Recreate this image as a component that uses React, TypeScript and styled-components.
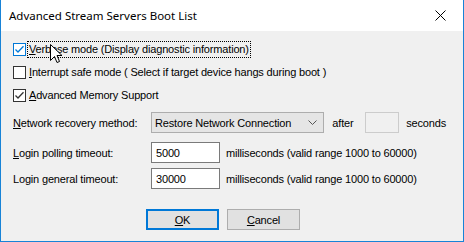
import React from 'react';
import styled, { createGlobalStyle } from 'styled-components';

const Global = createGlobalStyle`
    html, body {
        margin: 0;
        padding: 0;
        background: #ffffff;
    }
    body {
        font-family: 'Liberation Sans', Arial, sans-serif;
        font-size: 11px;
        letter-spacing: -0.17px;
        color: #000000;
    }
`;

const Window = styled.div`
    position: relative;
    width: 464px;
    height: 242px;
    box-sizing: border-box;
    border: 1px solid #1883d7;
    border-top: none;
    background: #f0f0f0;
    display: flex;
    flex-direction: column;
    overflow: hidden;
`;

const TitleBar = styled.div`
    height: 31px;
    flex-shrink: 0;
    background: #ffffff;
    display: flex;
    align-items: center;
    justify-content: space-between;
    padding: 0 0 0 8px;
`;

const Title = styled.span`
    font-family: 'Noto Sans', 'Open Sans', sans-serif;
    font-size: 11.5px;
    letter-spacing: 0;
    color: #000000;
    padding-bottom: 1px;
`;

const CloseButton = styled.div`
    width: 45px;
    height: 31px;
    display: flex;
    align-items: center;
    justify-content: center;
`;

const Body = styled.div`
    flex: 1;
    padding: 10px 11px 0 11px;
    display: flex;
    flex-direction: column;
`;

const CheckRow = styled.label`
    height: 17px;
    display: flex;
    align-items: center;
    margin-bottom: 6px;
`;

const Box = styled.span<{ $hover?: boolean }>`
    width: 13px;
    height: 13px;
    box-sizing: border-box;
    border: 1px solid ${p => (p.$hover ? '#0078d7' : '#333333')};
    background: #ffffff;
    display: flex;
    align-items: center;
    justify-content: center;
    margin-left: 1px;
    margin-right: 1px;
`;

const CheckText = styled.span<{ $focus?: boolean }>`
    padding: 1px 1px 2px 1px;
    border: 1px dotted ${p => (p.$focus ? '#000000' : 'transparent')};
    white-space: nowrap;
    line-height: 12px;
`;

const Key = styled.u`
    text-decoration: underline;
    text-underline-offset: 1px;
`;

const FormRow = styled.div<{ $top: number }>`
    display: flex;
    align-items: center;
    margin-top: ${p => p.$top}px;
    white-space: nowrap;
`;

const Label = styled.span`
    width: 138px;
    padding-left: 1px;
    flex-shrink: 0;
`;

const Combo = styled.div`
    width: 175px;
    height: 21px;
    box-sizing: border-box;
    border: 1px solid #adadad;
    background: #e5e5e5;
    display: flex;
    align-items: center;
    justify-content: space-between;
    padding: 0 6px 0 3px;
`;

const Edit = styled.div<{ $w: number; $h: number; $disabled?: boolean }>`
    width: ${p => p.$w}px;
    height: ${p => p.$h}px;
    box-sizing: border-box;
    border: 1px solid ${p => (p.$disabled ? '#cccccc' : '#7a7a7a')};
    background: ${p => (p.$disabled ? '#f0f0f0' : '#ffffff')};
    display: flex;
    align-items: center;
    padding-left: 4px;
`;

const Hint = styled.span<{ $gap: number; $right?: number }>`
    margin-left: ${p => p.$gap}px;
    margin-right: ${p => p.$right ?? 6}px;
`;

const Buttons = styled.div`
    display: flex;
    justify-content: flex-start;
    gap: 8px;
    margin-top: 20px;
    padding-left: 134px;
`;

const Button = styled.div<{ $default?: boolean }>`
    width: 73px;
    height: 21px;
    box-sizing: border-box;
    border: ${p => (p.$default ? '2px solid #0078d7' : '1px solid #adadad')};
    background: #e1e1e1;
    display: flex;
    align-items: center;
    justify-content: center;
`;

const Cursor = styled.svg`
    position: absolute;
    left: 49px;
    top: 44px;
`;

const Check = ({ color }: { color: string }) => (
    <svg width="11" height="11" viewBox="0 0 11 11">
        <path d="M1.5 5.5 L4 8 L9.5 2.2" fill="none" stroke={color} strokeWidth="1.3"/>
    </svg>
);

export default () => {
    return (
        <>
            <Global/>
            <Window>
                <TitleBar>
                    <Title>Advanced Stream Servers Boot List</Title>
                    <CloseButton>
                        <svg width="11" height="11" viewBox="0 0 11 11">
                            <path d="M0.5 0.5 L10.5 10.5 M10.5 0.5 L0.5 10.5" stroke="#000" strokeWidth="1"/>
                        </svg>
                    </CloseButton>
                </TitleBar>
                <Body>
                    <CheckRow>
                        <Box $hover={true}><Check color={'#0078d7'}/></Box>
                        <CheckText $focus={true}><Key>V</Key>erbose mode (Display diagnostic information)</CheckText>
                    </CheckRow>
                    <CheckRow>
                        <Box/>
                        <CheckText><Key>I</Key>nterrupt safe mode ( Select if target device hangs during boot )</CheckText>
                    </CheckRow>
                    <CheckRow>
                        <Box><Check color={'#333333'}/></Box>
                        <CheckText><Key>A</Key>dvanced Memory Support</CheckText>
                    </CheckRow>
                    <FormRow $top={2}>
                        <Label><Key>N</Key>etwork recovery method:</Label>
                        <Combo>
                            <span>Restore Network Connection</span>
                            <svg width="9" height="5" viewBox="0 0 9 5">
                                <path d="M0.5 0.5 L4.5 4.5 L8.5 0.5" fill="none" stroke="#555" strokeWidth="1"/>
                            </svg>
                        </Combo>
                        <Hint $gap={8} $right={11}>after</Hint>
                        <Edit $w={35} $h={21} $disabled={true}/>
                        <Hint $gap={7}>seconds</Hint>
                    </FormRow>
                    <FormRow $top={9}>
                        <Label><Key>L</Key>ogin polling timeout:</Label>
                        <Edit $w={69} $h={21}>5000</Edit>
                        <Hint $gap={6}>milliseconds (valid range 1000 to 60000)</Hint>
                    </FormRow>
                    <FormRow $top={5}>
                        <Label>Login <Key>g</Key>eneral timeout:</Label>
                        <Edit $w={69} $h={21}>30000</Edit>
                        <Hint $gap={6}>milliseconds (valid range 1000 to 60000)</Hint>
                    </FormRow>
                    <Buttons>
                        <Button $default={true}><Key>O</Key>K</Button>
                        <Button><Key>C</Key>ancel</Button>
                    </Buttons>
                </Body>
                <Cursor width="13" height="21" viewBox="0 0 13 21">
                    <path
                        d="M0.5 0.5 L0.5 16.5 L4.5 12.5 L7 18.5 L9.5 17.5 L7 11.5 L12 11.5 Z"
                        fill="#ffffff"
                        stroke="#000000"
                        strokeWidth="1"
                        strokeLinejoin="round"
                    />
                </Cursor>
            </Window>
        </>
    );
};
